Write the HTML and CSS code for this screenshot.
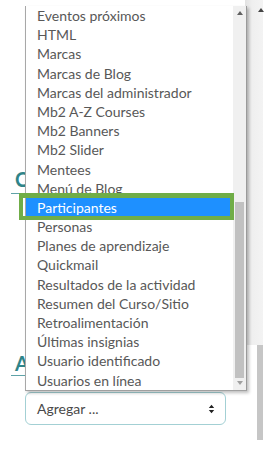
FILE: index.html
```html
<!DOCTYPE html>
<html lang="es">
<head>
<meta charset="utf-8">
<link rel="stylesheet" href="styles.css">
</head>
<body>
<div class="page">
  <div class="main">
    <h3 class="heading h1">C</h3>
    <h3 class="heading h2">A</h3>
    <div class="select">
      <span>Agregar ...</span>
      <svg class="caret" width="7" height="10" viewBox="0 0 7 10"><path d="M0.8 4 L3.5 0.8 L6.2 4 Z M0.8 6 L3.5 9.2 L6.2 6 Z" fill="#222"/></svg>
    </div>
  </div>
  <div class="pagebar">
    <div class="pagebar-track"></div>
    <div class="pagebar-lower"><div class="pagebar-thumb"></div></div>
    <svg class="pagebar-up" width="6" height="4" viewBox="0 0 6 4"><path d="M0 4 L3 0 L6 4 Z" fill="#444"/></svg>
  </div>

  <div class="listbox">
    <ul class="items">
      <li>Eventos próximos</li>
      <li>HTML</li>
      <li>Marcas</li>
      <li>Marcas de Blog</li>
      <li>Marcas del administrador</li>
      <li>Mb2 A-Z Courses</li>
      <li>Mb2 Banners</li>
      <li>Mb2 Slider</li>
      <li>Mentees</li>
      <li>Menú de Blog</li>
      <li class="selected">Participantes</li>
      <li>Personas</li>
      <li>Planes de aprendizaje</li>
      <li>Quickmail</li>
      <li>Resultados de la actividad</li>
      <li>Resumen del Curso/Sitio</li>
      <li>Retroalimentación</li>
      <li>Últimas insignias</li>
      <li>Usuario identificado</li>
      <li>Usuarios en línea</li>
    </ul>
    <div class="lb-scroll">
      <svg class="arrow" width="6" height="4" viewBox="0 0 6 4"><path d="M0 4 L3 0 L6 4 Z" fill="#606060"/></svg>
      <div class="lb-track"><div class="lb-thumb"></div></div>
      <svg class="arrow" width="6" height="4" viewBox="0 0 6 4"><path d="M0 0 L3 4 L6 0 Z" fill="#a0a0a0"/></svg>
    </div>
  </div>
  <div class="highlight"></div>
</div>
</body>
</html>
```

FILE: styles.css
```css
html, body {
  margin: 0;
  padding: 0;
  background: #ffffff;
}
body {
  font-family: Lato, "Liberation Sans", sans-serif;
  width: 271px;
  height: 454px;
  overflow: hidden;
}
.page {
  position: relative;
  display: flex;
  width: 271px;
  height: 454px;
}
.main {
  width: 234px;
  padding-left: 11px;
  display: flex;
  flex-direction: column;
  align-items: flex-start;
}
.heading {
  margin: 0;
  width: 14px;
  box-sizing: border-box;
  font-size: 20px;
  line-height: 24px;
  font-weight: 700;
  color: #2f8489;
  padding-left: 4px;
  border-bottom: 1px solid #5fa3a8;
  white-space: nowrap;
  overflow: hidden;
}
.h1 {
  margin-top: 167px;
  padding-bottom: 2px;
}
.h2 {
  margin-top: 157px;
}
.select {
  margin-top: 16px;
  margin-left: 14px;
  width: 201px;
  height: 33px;
  box-sizing: border-box;
  border: 1px solid #a3d0d4;
  border-radius: 6px;
  display: flex;
  align-items: center;
  justify-content: space-between;
  padding: 0 10px 0 11px;
  font-size: 14px;
  color: #4a4a4a;
}
.caret {
  display: block;
}
.pagebar {
  position: relative;
  width: 18px;
  display: flex;
  flex-direction: column;
}
.pagebar-track {
  height: 345px;
  background: linear-gradient(to right, #e2e2e2, #efefef 40%, #f3f3f3);
}
.pagebar-lower {
  height: 95px;
  display: flex;
  justify-content: flex-end;
}
.pagebar-thumb {
  width: 6px;
  height: 100%;
  background: #c6c6c6;
}
.pagebar-up {
  position: absolute;
  right: -1px;
  top: 8px;
}
.listbox {
  position: absolute;
  left: 25px;
  top: 6px;
  width: 220px;
  height: 384px;
  box-sizing: content-box;
  border-left: 1px solid #a8a8a8;
  border-right: 1px solid #9a9a9a;
  border-bottom: 1px solid #a0a0a0;
  background: #ffffff;
  display: flex;
  box-shadow: 2px 2px 3px rgba(0, 0, 0, 0.25);
}
.items {
  list-style: none;
  margin: 0;
  padding: 0;
  flex: 1;
  display: flex;
  flex-direction: column;
}
.items li {
  height: 19.2px;
  line-height: 19.2px;
  padding-left: 11px;
  font-size: 14px;
  color: #585858;
  white-space: nowrap;
}
.items li.selected {
  background: #1e90ff;
  color: #ffffff;
}
.lb-scroll {
  width: 13px;
  background: #f0f0f0;
  display: flex;
  flex-direction: column;
  align-items: center;
  padding-top: 5px;
  padding-bottom: 5px;
  gap: 3px;
  box-sizing: border-box;
}
.arrow {
  display: block;
  flex: none;
}
.lb-track {
  flex: 1;
  width: 100%;
  display: flex;
  flex-direction: column;
  justify-content: flex-end;
  align-items: center;
}
.lb-thumb {
  width: 9px;
  height: 176px;
  background: #c1c1c1;
}
.highlight {
  position: absolute;
  left: 19px;
  top: 193px;
  width: 215px;
  height: 27px;
  box-sizing: border-box;
  border: 4px solid #70ad47;
  border-top-width: 5px;
}
```
